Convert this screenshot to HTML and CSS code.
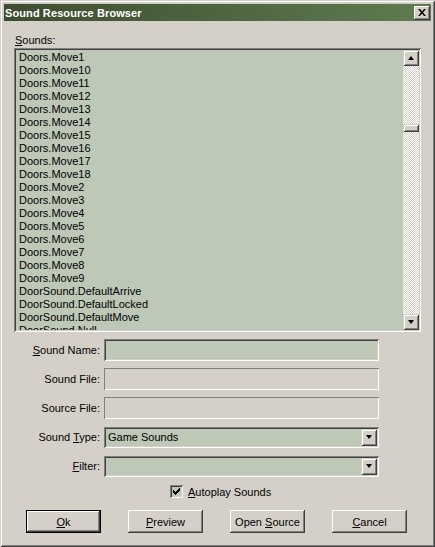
FILE: index.html
```html
<!DOCTYPE html>
<html>
<head>
<meta charset="utf-8">
<link rel="stylesheet" href="styles.css">
</head>
<body>
<div class="window">
  <div class="titlebar">
    <span class="title">Sound Resource Browser</span>
    <span class="close">
      <svg width="8" height="7" viewBox="0 0 8 7"><path d="M0 0h2l2 2.5L6 0h2L5 3.5L8 7H6L4 4.5L2 7H0l3-3.5z" fill="#000"/></svg>
    </span>
  </div>
  <div class="sounds-label"><u>S</u>ounds:</div>
  <div class="listbox">
    <div class="items">
      <div>Doors.Move1</div>
      <div>Doors.Move10</div>
      <div>Doors.Move11</div>
      <div>Doors.Move12</div>
      <div>Doors.Move13</div>
      <div>Doors.Move14</div>
      <div>Doors.Move15</div>
      <div>Doors.Move16</div>
      <div>Doors.Move17</div>
      <div>Doors.Move18</div>
      <div>Doors.Move2</div>
      <div>Doors.Move3</div>
      <div>Doors.Move4</div>
      <div>Doors.Move5</div>
      <div>Doors.Move6</div>
      <div>Doors.Move7</div>
      <div>Doors.Move8</div>
      <div>Doors.Move9</div>
      <div>DoorSound.DefaultArrive</div>
      <div>DoorSound.DefaultLocked</div>
      <div>DoorSound.DefaultMove</div>
      <div>DoorSound.Null</div>
    </div>
    <div class="vscroll">
      <div class="sbtn"><span class="arrow-up"></span></div>
      <div class="track">
        <div class="thumb"></div>
      </div>
      <div class="sbtn"><span class="arrow-down"></span></div>
    </div>
  </div>

  <div class="form">
    <label class="lbl"><u>S</u>ound Name:</label>
    <div class="field"></div>
    <label class="lbl">Sound File:</label>
    <div class="field disabled"></div>
    <label class="lbl">Source File:</label>
    <div class="field disabled"></div>
    <label class="lbl">Sound <u>T</u>ype:</label>
    <div class="field combo"><span class="combo-text">Game Sounds</span><span class="dbtn"><span class="arrow-down"></span></span></div>
    <label class="lbl"><u>F</u>ilter:</label>
    <div class="field combo"><span class="combo-text"></span><span class="dbtn"><span class="arrow-down"></span></span></div>
  </div>

  <div class="check-row">
    <span class="checkbox">
      <svg width="7" height="7" viewBox="0 0 7 7"><path d="M0 2h1v1h1v1h1V3h1V2h1V1h1V0h1v3H6v1H5v1H4v1H3v1H2V6H1V5H0z" fill="#000"/></svg>
    </span>
    <span class="check-label"><u>A</u>utoplay Sounds</span>
  </div>

  <div class="buttons">
    <div class="btn default"><span class="btn-in"><span><u>O</u>k</span></span></div>
    <div class="btn"><span class="btn-in"><span><u>P</u>review</span></span></div>
    <div class="btn"><span class="btn-in"><span>Open <u>S</u>ource</span></span></div>
    <div class="btn"><span class="btn-in"><span><u>C</u>ancel</span></span></div>
  </div>
</div>
</body>
</html>
```
FILE: styles.css
```css
* { box-sizing: border-box; }
html, body { margin: 0; padding: 0; }
body {
  width: 435px;
  height: 547px;
  overflow: hidden;
  background: #d4d0c8;
  font-family: "Liberation Sans", Arial, sans-serif;
  font-size: 11px;
  color: #000;
}
u { text-decoration: underline; text-underline-offset: 1px; }

.window {
  width: 435px;
  height: 547px;
  padding: 4px;
  background: #d4d0c8;
  box-shadow: inset 1px 1px #d4d0c8, inset -1px -1px #404040,
              inset 2px 2px #ffffff, inset -2px -2px #808080;
}

.titlebar {
  height: 17px;
  display: flex;
  align-items: center;
  justify-content: space-between;
  padding-left: 1px;
  padding-right: 1px;
  background: linear-gradient(to right, #3c4d31, #5f7c51);
}
.title {
  color: #fff;
  font-weight: bold;
  font-size: 11px;
  letter-spacing: 0.1px;
}
.close {
  width: 16px;
  height: 14px;
  display: flex;
  align-items: center;
  justify-content: center;
  background: #d4d0c8;
  box-shadow: inset -1px -1px #404040, inset 1px 1px #ffffff,
              inset -2px -2px #808080;
}

.sounds-label {
  margin-top: 13px;
  margin-left: 11px;
  height: 13px;
  line-height: 13px;
}

.listbox {
  margin-top: 1px;
  margin-left: 10px;
  width: 407px;
  height: 284px;
  padding: 2px;
  display: flex;
  background: #bdc8b7;
  box-shadow: inset 1px 1px #808080, inset -1px -1px #ffffff,
              inset 2px 2px #404040, inset -2px -2px #d4d0c8;
}
.items {
  flex: 1;
  overflow: hidden;
  padding-left: 3px;
  padding-top: 1px;
  line-height: 13px;
  white-space: nowrap;
}
.vscroll {
  width: 16px;
  display: flex;
  flex-direction: column;
}
.sbtn {
  width: 16px;
  height: 16px;
  flex: none;
  display: flex;
  align-items: center;
  justify-content: center;
  background: #d4d0c8;
  box-shadow: inset 1px 1px #d4d0c8, inset -1px -1px #404040,
              inset 2px 2px #ffffff, inset -2px -2px #808080;
}
.track {
  flex: 1;
  padding-top: 58px;
  background: repeating-conic-gradient(#ffffff 0 25%, #d4d0c8 0 50%) 0 0 / 2px 2px;
}
.thumb {
  height: 8px;
  background: #d4d0c8;
  box-shadow: inset 1px 1px #d4d0c8, inset -1px -1px #404040,
              inset 2px 2px #ffffff, inset -2px -2px #808080;
}
.arrow-up, .arrow-down {
  width: 0;
  height: 0;
  border-left: 3.5px solid transparent;
  border-right: 3.5px solid transparent;
}
.arrow-up { border-bottom: 4px solid #000; }
.arrow-down { border-top: 4px solid #000; }

.form {
  margin-top: 7px;
  display: grid;
  grid-template-columns: 100px 275px;
  grid-auto-rows: 22px;
  row-gap: 7px;
  align-items: center;
}
.lbl {
  text-align: right;
  padding-right: 4px;
  white-space: nowrap;
}
.field {
  height: 22px;
  background: #bdc8b7;
  box-shadow: inset 1px 1px #808080, inset -1px -1px #ffffff,
              inset 2px 2px #404040, inset -2px -2px #d4d0c8;
}
.field.disabled {
  background: #d4d0c8;
  box-shadow: inset 1px 1px #808080, inset -1px -1px #ffffff;
}
.field.combo {
  height: 21px;
  padding: 2px;
  display: flex;
  align-items: center;
}
.combo-text {
  flex: 1;
  padding-left: 2px;
}
.dbtn {
  width: 16px;
  height: 17px;
  display: flex;
  align-items: center;
  justify-content: center;
  background: #d4d0c8;
  box-shadow: inset 1px 1px #d4d0c8, inset -1px -1px #404040,
              inset 2px 2px #ffffff, inset -2px -2px #808080;
}

.check-row {
  margin-top: 8px;
  margin-left: 166px;
  height: 13px;
  display: flex;
  align-items: center;
}
.checkbox {
  width: 13px;
  height: 13px;
  display: flex;
  align-items: center;
  justify-content: center;
  background: #bdc8b7;
  box-shadow: inset 1px 1px #808080, inset -1px -1px #ffffff,
              inset 2px 2px #404040, inset -2px -2px #d4d0c8;
}
.check-label {
  margin-left: 5px;
}

.buttons {
  margin-top: 12px;
  margin-left: 22px;
  width: 381px;
  display: flex;
  justify-content: space-between;
}
.btn {
  width: 75px;
  height: 23px;
  display: flex;
  background: #d4d0c8;
  box-shadow: inset -1px -1px #404040, inset 1px 1px #ffffff,
              inset -2px -2px #808080;
}
.btn-in {
  flex: 1;
  display: flex;
  align-items: center;
  justify-content: center;
}
.btn.default {
  border: 1px solid #000;
  box-shadow: none;
}
.btn.default .btn-in {
  box-shadow: inset -1px -1px #404040, inset 1px 1px #ffffff,
              inset -2px -2px #808080;
}
```
